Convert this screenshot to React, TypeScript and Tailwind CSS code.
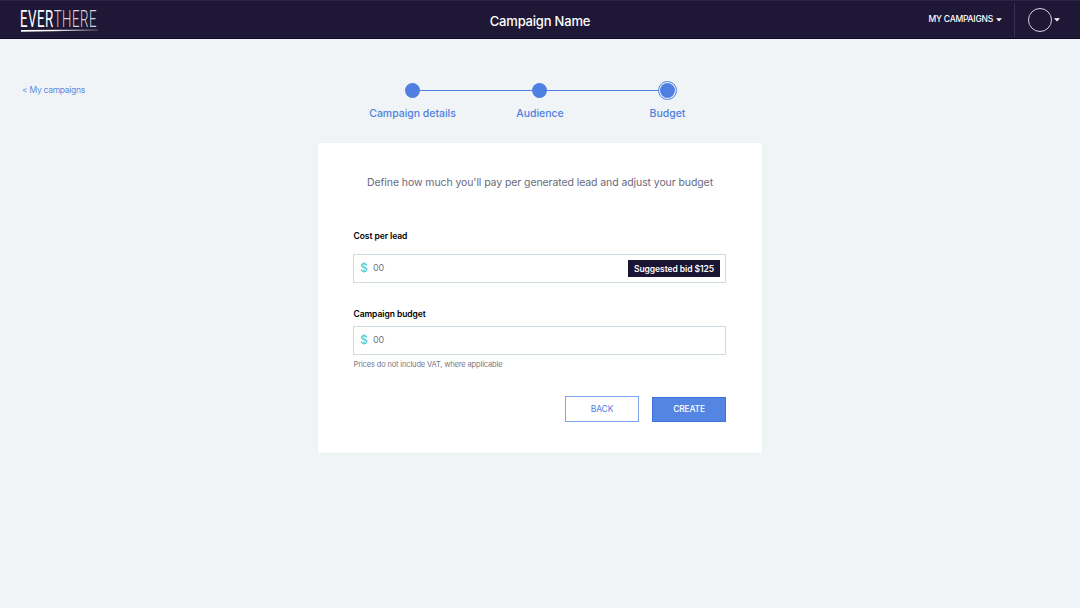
const Logo = () => (
  <svg className="block overflow-visible" width="80" height="36" viewBox="0 0 80 36" role="img" aria-label="Everthere">
    <defs>
      <linearGradient id="fade" x1="0" x2="1" y1="0" y2="0">
        <stop offset="0.4" stopColor="#ffffff" />
        <stop offset="1" stopColor="#5d5870" />
      </linearGradient>
    </defs>
    <text x="-1" y="25" textLength="77" lengthAdjust="spacingAndGlyphs" fontFamily="Roboto, sans-serif" fontSize="23" letterSpacing="0.8">
      <tspan fontWeight="400" fill="#ffffff">EVER</tspan>
      <tspan fontWeight="300" fill="#d6d4de">THERE</tspan>
    </text>
    <path d="M0 28 L77 27.4 L77 28.6 L0 29.8 Z" fill="url(#fade)" />
  </svg>
);

const Caret = () => (
  <svg className="block" width="6" height="4" viewBox="0 0 6 4">
    <path d="M0 0.3 H6 L3 3.4 Z" fill="#fff" />
  </svg>
);

const Step = ({ label, active }: { label: string; active?: boolean }) => (
  <li className="flex w-[127.5px] flex-col items-center">
    <span className="flex h-[19px] items-center justify-center">
      {active ? (
        <span className="flex size-[19px] items-center justify-center rounded-full border border-[#4f80e1] bg-[#f0f4f7]">
          <span className="size-[15px] rounded-full bg-[#4f80e1]" />
        </span>
      ) : (
        <span className="size-[15px] rounded-full bg-[#4f80e1]" />
      )}
    </span>
    <span className="mt-[6px] ml-[0.5px] text-[10.5px] leading-[16px] font-medium tracking-[-0.03px] whitespace-nowrap text-[#4f80e1]">{label}</span>
  </li>
);

const MoneyField = ({ bid }: { bid?: string }) => (
  <div className="flex h-[29px] w-[373px] items-center border border-[#cfdbe3] bg-white pr-[5px] pl-[6px]">
    <span className="w-[13px] pb-px text-[12px] leading-[14px] font-medium text-[#5fcbc9]">$</span>
    <span className="pb-[2px] text-[9px] leading-[14px] tracking-[-0.2px] text-[#777687]">00</span>
    {bid && (
      <span className="ml-auto flex h-[17px] w-[92px] items-center justify-center bg-[#1b1433] pt-px text-[8.5px] font-semibold tracking-[-0.07px] whitespace-nowrap text-white">
        {bid}
      </span>
    )}
  </div>
);

export default function App() {
  return (
    <div className="h-[608px] w-[1080px] overflow-hidden bg-[#f0f4f7] font-['Inter',sans-serif]">
      <header className="grid h-[39px] grid-cols-[1fr_auto_1fr] items-center border-t border-b border-t-[#2b2544] border-b-[#0e0727] bg-[#1e1735] text-white">
        <div className="pl-[21px]">
          <Logo />
        </div>
        <h1 className="pt-[2px] text-[13px] leading-[16px] font-medium tracking-[-0.2px]">Campaign Name</h1>
        <div className="flex h-full items-center justify-end">
          <span className="pb-px text-[8.5px] leading-[12px] font-medium tracking-[-0.23px]">MY CAMPAIGNS</span>
          <span className="ml-[3px] pt-px"><Caret /></span>
          <span className="ml-[12px] h-[34px] w-px bg-[#37314d]" />
          <span className="ml-[13px] size-[24px] rounded-full border border-[#d5d3dc]" />
          <span className="mr-[20px] ml-[2px] pt-px"><Caret /></span>
        </div>
      </header>

      <main className="grid grid-cols-[318px_444px_318px]">
        <a className="mt-[45px] ml-[22px] text-[8.5px] leading-[13px] tracking-[-0.28px] text-[#5d8ae3]">&lt; My campaigns</a>
        <div>
          <nav className="relative mt-[42px] ml-[30.5px] h-[62px] w-[383px]">
            <span className="absolute top-[9px] left-[64px] h-px w-[246px] bg-[#4f80e1]" />
            <ol className="relative flex">
              <Step label="Campaign details" />
              <Step label="Audience" />
              <Step label="Budget" active />
            </ol>
          </nav>
          <section className="h-[310px] bg-white px-[35px] pt-[33px] shadow-[0_0_1px_#dfe6eb]">
            <p className="text-center text-[10.5px] leading-[14px] tracking-[-0.09px] whitespace-nowrap text-[#6a6a7c]">
              Define how much you'll pay per generated lead and adjust your budget
            </p>
            <h2 className="mt-[40px] ml-[0.5px] text-[8.5px] leading-[12px] font-semibold tracking-[-0.06px] text-black">Cost per lead</h2>
            <div className="mt-[12px]"><MoneyField bid="Suggested bid $125" /></div>
            <h2 className="mt-[25px] ml-[0.5px] text-[8.5px] leading-[12px] font-semibold tracking-[-0.06px] text-black">Campaign budget</h2>
            <div className="mt-[6px]"><MoneyField /></div>
            <p className="mt-[4px] ml-[0.5px] text-[7.5px] leading-[11px] tracking-[-0.15px] text-[#777687]">Prices do not include VAT, where applicable</p>
            <div className="mt-[26px] flex items-end gap-[13px] pl-[212px]">
              <button className="h-[26px] w-[74px] border border-[#7da3ec] bg-white text-[8.5px] tracking-[-0.15px] text-[#4f80e1]">BACK</button>
              <button className="h-[25px] w-[74px] border border-[#3f73db] bg-[#5585e2] text-[8.5px] font-medium tracking-[-0.2px] text-white">CREATE</button>
            </div>
          </section>
        </div>
      </main>
    </div>
  );
}
